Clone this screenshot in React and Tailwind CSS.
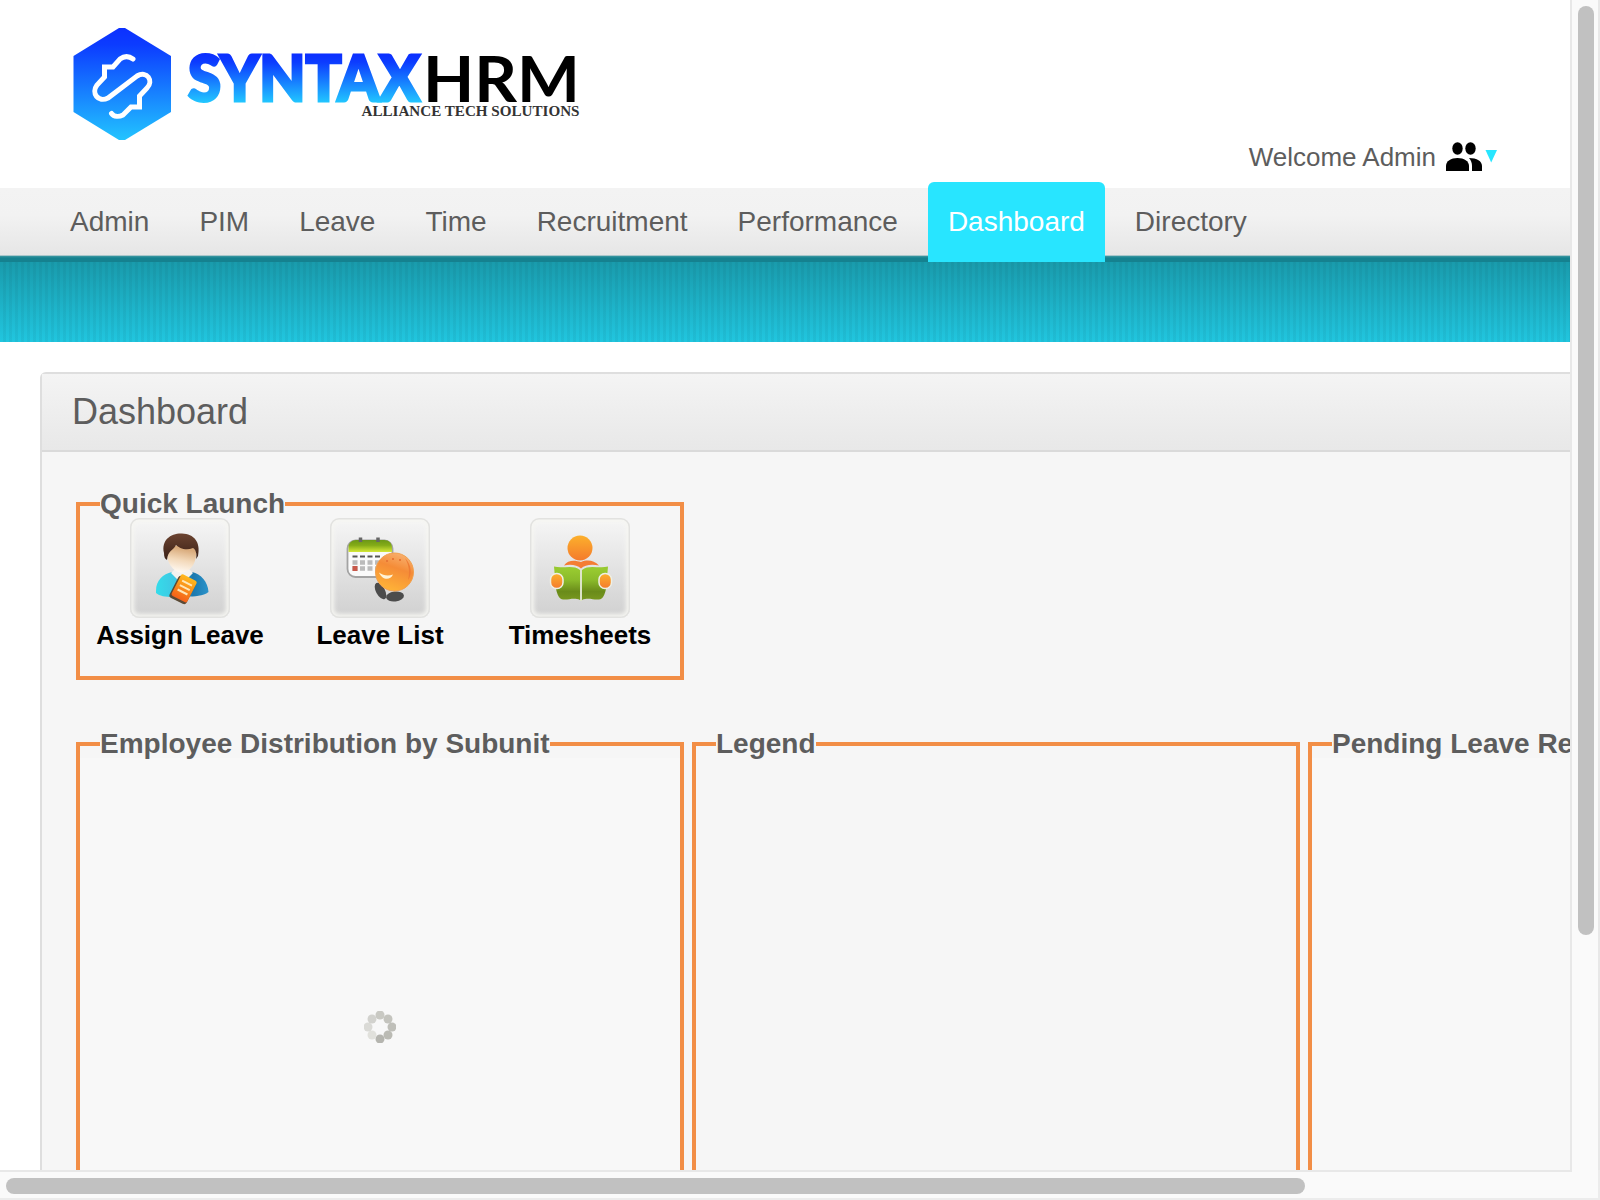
import React from "react";

const tabs = ["Admin", "PIM", "Leave", "Time", "Recruitment", "Performance", "Dashboard", "Directory"];

function Logo() {
  return (
    <svg width="530" height="130" viewBox="60 20 530 130" className="block">
      <defs>
        <linearGradient id="hex" x1="0" y1="28" x2="0" y2="140" gradientUnits="userSpaceOnUse">
          <stop offset="0" stopColor="#0c30ff" />
          <stop offset="0.15" stopColor="#0c3cff" />
          <stop offset="1" stopColor="#22c4ff" />
        </linearGradient>
        <linearGradient id="word" x1="0" y1="55" x2="0" y2="103" gradientUnits="userSpaceOnUse">
          <stop offset="0" stopColor="#0c30ff" />
          <stop offset="0.15" stopColor="#0c3cff" />
          <stop offset="1" stopColor="#22c8ff" />
        </linearGradient>
      </defs>
      <path d="M119 28h6L171 56V112L125 140h-6L73.500 112V56Z" fill="url(#hex)" />
      <g fill="none" stroke="#fff" strokeWidth="5" strokeLinecap="round" strokeLinejoin="miter">
        <path d="M133 59C129 56 124 56 120 59L113 67H104.500V77L97 85C91 93 98 103 108 98L137 76C147 70 154 81 147 88L139.500 96V107H131L123 115C119 117 114 117 111.500 113.500" />
      </g>
      <text x="188" y="101" fontFamily="Lato" fontWeight="900" fontSize="63" textLength="232" lengthAdjust="spacingAndGlyphs" fill="url(#word)" stroke="url(#word)" strokeWidth="3">SYNTAX</text>
      <text x="423" y="102" fontFamily="Lato" fontWeight="700" fontSize="64" textLength="157" lengthAdjust="spacingAndGlyphs" fill="#000">HRM</text>
      <text x="361.500" y="116" fontFamily="Liberation Serif" fontWeight="700" fontSize="15" textLength="218" lengthAdjust="spacingAndGlyphs" fill="#333">ALLIANCE TECH SOLUTIONS</text>
    </svg>
  );
}

function AssignIcon() {
  return (
    <svg width="100" height="100" viewBox="0 0 100 100" className="block">
      <defs>
        <linearGradient id="hair" x1="0" y1="0" x2="0" y2="1"><stop stopColor="#6b4330" /><stop offset="1" stopColor="#3a2016" /></linearGradient>
        <linearGradient id="face" x1="0.600" y1="0" x2="0.400" y2="1"><stop offset="0.150" stopColor="#d9ab7c" /><stop offset="0.550" stopColor="#f3d9ba" /><stop offset="1" stopColor="#fffaf4" /></linearGradient>
        <linearGradient id="shirt"><stop stopColor="#35dcea" /><stop offset="0.4" stopColor="#3fc4e2" /><stop offset="0.7" stopColor="#1b78ae" /><stop offset="1" stopColor="#2b93ca" /></linearGradient>
        <linearGradient id="note" x1="0" y1="0" x2="0" y2="1"><stop stopColor="#ffb81c" /><stop offset="1" stopColor="#f4611a" /></linearGradient>
      </defs>
      <path d="M26 73C26 62 33 56 42 54H62C71 56 78 64 78.500 74C72 79 61 78.500 52 78.500C42 79.500 31 79.500 26 75Z" fill="url(#shirt)" />
      <path d="M41 55L48 62L52 67L58 60L63 55L58 50H46Z" fill="#f4f2ef" />
      <path d="M37 33C40 26 62 24 66 33C67 44 61 54 51.500 54.500C43 54 36 44 37 33Z" fill="url(#face)" />
      <path d="M34 35C31 22 41 15 52 15.500C64 16 71 24 68 38L66 41C67 36 66 32 63 30C56 33 49 30 46 27C43 33 38 32 37 42C35 41 34 39 34 35Z" fill="url(#hair)" />
      <g transform="rotate(27 53 72)">
        <rect x="43" y="60" width="19" height="24.500" rx="3" fill="#5a4a36" />
        <rect x="44.500" y="58" width="17.500" height="24" rx="2" fill="url(#note)" />
        <path d="M48 64h11M48 69h11M48 74h11" stroke="#ffe7b8" strokeWidth="2" />
      </g>
    </svg>
  );
}

function LeaveIcon() {
  return (
    <svg width="100" height="100" viewBox="0 0 100 100" className="block">
      <defs>
        <linearGradient id="cal" x1="0" y1="0" x2="0" y2="1"><stop stopColor="#6b9716" /><stop offset="0.45" stopColor="#85ac18" /><stop offset="1" stopColor="#d5e838" /></linearGradient>
        <linearGradient id="ball" x1="0.700" y1="0" x2="0.350" y2="1"><stop stopColor="#f8b171" /><stop offset="0.4" stopColor="#f58c37" /><stop offset="1" stopColor="#ffb437" /></linearGradient>
      </defs>
      <rect x="17.500" y="22.500" width="45" height="36.500" rx="8" fill="#fafafa" stroke="#a3a3a3" strokeWidth="1.800" />
      <path d="M18.500 34V29C18.500 25 22 22 26 22H54C59 22 62 25 62 30V34Z" fill="url(#cal)" />
      <path d="M30.500 19.500v4.500M48 19.500v4.500" stroke="#666" strokeWidth="3.500" />
      <path d="M22.500 38.500h28" stroke="#555" strokeWidth="2" strokeDasharray="5 2.500" />
      <path d="M22.500 44.500h28M22.500 50.500h28" stroke="#bbb" strokeWidth="4.500" strokeDasharray="5 2.500" />
      <rect x="22.500" y="48" width="5" height="5" fill="#c8594b" />
      <ellipse cx="50.500" cy="73" rx="4.500" ry="9" transform="rotate(-28 50.500 73)" fill="#4c4c4c" />
      <ellipse cx="65" cy="78.500" rx="9" ry="5" transform="rotate(-7 65 78.500)" fill="#4c4c4c" />
      <circle cx="64.500" cy="54" r="19" fill="url(#ball)" stroke="#f2a04d" />
      <path d="M75 40C82 47 82 57 78 62C80 54 79 47 75 40Z" fill="#ee7c34" />
      <path d="M49 54.500C53 57.500 58 58.500 63 56.500C60 63 52 62 49 54.500Z" fill="#fff3d6" />
      <path d="M56 43h2M62 41h2M69 42h2" stroke="#e87835" strokeWidth="2" />
    </svg>
  );
}

function TimesheetIcon() {
  return (
    <svg width="100" height="100" viewBox="0 0 100 100" className="block">
      <defs>
        <linearGradient id="orange" x1="0" y1="0" x2="0" y2="1"><stop stopColor="#fcb02c" /><stop offset="1" stopColor="#f47b2c" /></linearGradient>
        <linearGradient id="book" x1="0" y1="0" x2="0" y2="1"><stop offset="0.100" stopColor="#97c930" /><stop offset="0.400" stopColor="#8bbb2b" /><stop offset="0.750" stopColor="#6a8b1a" /><stop offset="1" stopColor="#78981f" /></linearGradient>
      </defs>
      <circle cx="50" cy="30" r="12.500" fill="url(#orange)" />
      <path d="M34 47.500C38 41.500 45 42 51 44C57 41.500 64 42 69 47.500C61 46 55 47 51 50.500C47 47 41 46 34 47.500Z" fill="#f47d34" />
      <path d="M24 48.500C33 51 43 46 50 52V82C43 79 37 83 31 81C28 79 27 75 26 71Z" fill="url(#book)" />
      <path d="M78 48.500C69 51 59 46 52 52V82C59 79 65 83 71 81C74 79 75 75 76 71Z" fill="url(#book)" />
      <path d="M51 52V83" stroke="#dce6c2" strokeWidth="1.500" />
      <rect x="20.500" y="55.500" width="12.500" height="15" rx="6" fill="url(#orange)" stroke="#eef0e5" strokeWidth="1.500" />
      <rect x="69" y="55.500" width="12.500" height="15" rx="6" fill="url(#orange)" stroke="#eef0e5" strokeWidth="1.500" />
    </svg>
  );
}

function Launch({ label, children }) {
  return (
    <div className="flex w-[200px] flex-col items-center">
      <div className="h-[100px] w-[100px] rounded-[9px] bg-linear-to-b from-[#f6f6f6] to-[#d0d0d0] shadow-[inset_0_0_0_1.5px_#e2e2e0,inset_0_0_4px_4px_#f6f6f2]">
        {children}
      </div>
      <span className="mt-[2px] whitespace-nowrap text-[26px] font-bold leading-[30px] text-black">{label}</span>
    </div>
  );
}

function Box({ title, className, children }) {
  return (
    <fieldset className={"w-[608px] min-w-0 shrink-0 border-4 border-[#f28e46] pl-0 " + className}>
      <legend className="ml-[20px] whitespace-nowrap text-[28px] font-bold leading-[32px]">{title}</legend>
      {children}
    </fieldset>
  );
}

const dots = [
  [16, 4, "#c9c9c3"], [24, 8, "#c4c4be"], [28, 16, "#bfbfb9"], [24, 24, "#bbbbb4"],
  [16, 28, "#b5b5af"], [8, 24, "#e1e1dc"], [4, 16, "#dadad6"], [8, 8, "#d2d2ce"],
];

export default function App() {
  return (
    <div className="grid h-[1200px] w-[1600px] grid-cols-[1570px_30px] grid-rows-[1170px_30px] overflow-hidden bg-white font-['Liberation_Sans',Arial,sans-serif] text-[#5d5d5d]">
      <div className="overflow-hidden bg-white">
        <header className="flex h-[188px] justify-between pl-[60px] pr-[72px] pt-[20px]">
          <Logo />
          <div className="mt-[122px] flex h-[30px] items-start">
            <span className="whitespace-nowrap text-[26px] leading-[30px]">Welcome Admin</span>
            <svg width="37" height="30" viewBox="0 0 37 30" className="ml-[10px]">
              <ellipse cx="11.500" cy="6.500" rx="5.200" ry="6.200" />
              <ellipse cx="24.500" cy="6.500" rx="5.200" ry="6.200" />
              <path d="M0 29V24C0 19 5 16 11.500 16C18 16 23 19 23 24V29Z" />
              <path d="M23 16C31 16 36 19 36 24V29H26V24C26 21 25 18 23 16Z" />
            </svg>
            <svg width="13" height="30" viewBox="0 0 13 30" className="ml-[2px]"><path d="M0.500 8H12L6.200 20.500Z" fill="#28e6ff" /></svg>
          </div>
        </header>
        <nav className="relative flex h-[74px] items-start gap-[10px] bg-[linear-gradient(#f3f3f3_0,#f2f2f2_27px,#e6e6e6_67px,#a9c7cb_67px,#a9c7cb_68px,#3d98a2_68px,#15818f_70px,#15818f_74px)] pl-[50px]">
          {tabs.map((t) => (
            <div key={t} className={"-mt-[6px] h-[80px] px-[20px] pt-[24px] text-[28px] leading-[32px] " + (t === "Dashboard" ? "rounded-t-[6px] bg-[#28e5ff] text-white" : "")}>
              {t}
            </div>
          ))}
        </nav>
        <div className="h-[80px] bg-[repeating-linear-gradient(90deg,rgba(0,30,40,0)_0,rgba(0,30,40,0)_3px,rgba(0,30,40,0.05)_3px,rgba(0,30,40,0.05)_6px),linear-gradient(#199bac,#21c6df)]" />

        <main className="ml-[40px] mt-[30px] h-[900px] w-[1960px] rounded-tl-[6px] border-2 border-[#dedede] bg-[#f6f6f6]">
          <h1 className="h-[78px] border-b-2 border-[#dadada] bg-linear-to-b from-[#f4f4f4] to-[#e8e8e8] pl-[30px] pt-[17px] text-[36px] leading-[42px]">Dashboard</h1>
          <div className="pl-[34px] pt-[36px]">
            <Box title="Quick Launch" className="h-[192px]">
              <div className="-mt-[2px] flex">
                <Launch label="Assign Leave"><AssignIcon /></Launch>
                <Launch label="Leave List"><LeaveIcon /></Launch>
                <Launch label="Timesheets"><TimesheetIcon /></Launch>
              </div>
            </Box>
            <div className="mt-[48px] flex gap-[8px]">
              <Box title="Employee Distribution by Subunit" className="h-[550px]">
                <div className="-mt-[2px] flex h-[510px] justify-center bg-[#f8f8f8] pt-[253px]">
                  <svg width="32" height="32" viewBox="0 0 32 32">
                    {dots.map(([x, y, c]) => <circle key={x + "-" + y} cx={x} cy={y} r="4.500" fill={c} />)}
                  </svg>
                </div>
              </Box>
              <Box title="Legend" className="h-[550px]">
                <div className="-mt-[2px] h-[510px]" />
              </Box>
              <Box title="Pending Leave Requests" className="h-[550px]">
                <div className="-mt-[2px] h-[510px] bg-[#f8f8f8]" />
              </Box>
            </div>
          </div>
        </main>
      </div>
      <div className="h-[1172px] border-x-2 border-[#e8e8e8] bg-[#fafafa] pl-[6px] pt-[6px]">
        <div className="h-[929px] w-[16px] rounded-full bg-[#c1c1c1]" />
      </div>
      <div className="relative col-span-2 border-b-2 border-r-2 border-[#ececec] bg-[#fafafa]">
        <div className="h-[2px] w-[1572px] bg-[#e8e8e8]" />
        <div className="ml-[6px] mt-[6px] h-[16px] w-[1299px] rounded-full bg-[#c1c1c1]" />
      </div>
    </div>
  );
}
